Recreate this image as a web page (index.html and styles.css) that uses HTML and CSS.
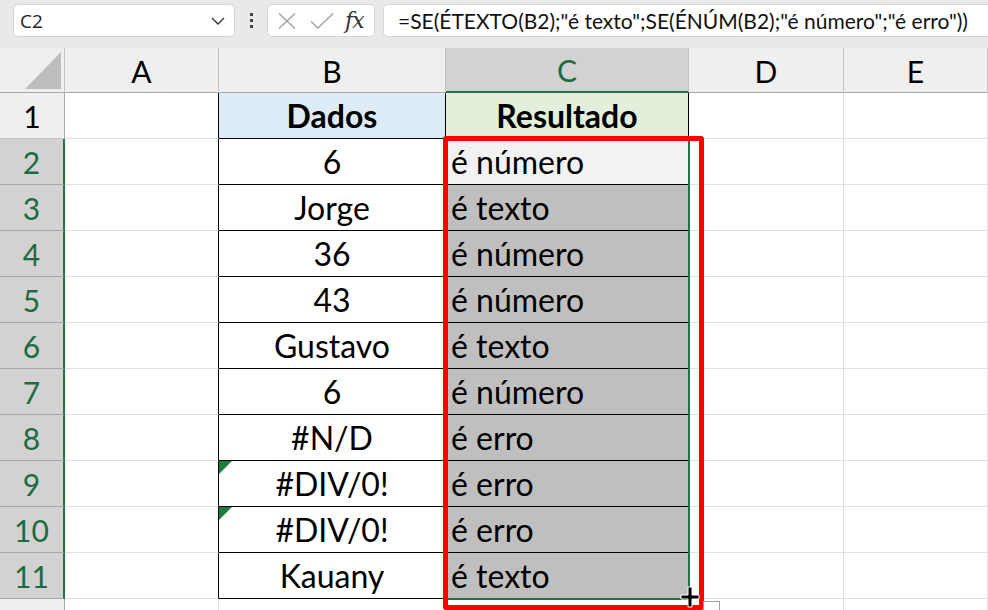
FILE: index.html
```html
<!DOCTYPE html>
<html lang="pt-BR">
<head>
    <meta charset="UTF-8">
    <title>Planilha - SE ÉTEXTO ÉNÚM</title>
    <link rel="stylesheet" href="styles.css">
</head>
<body>
    <div class="toolbar">
        <div class="namebox">
            <span>C2</span>
            <svg class="chevron" width="14" height="8" viewBox="0 0 14 8"><path d="M1 1 L7 7 L13 1" fill="none" stroke="#333" stroke-width="1.4"/></svg>
        </div>
        <div class="grip"><i></i><i></i><i></i></div>
        <div class="fxbox">
            <svg width="18" height="16" viewBox="0 0 18 16"><path d="M1 0.5 L17 15.5 M17 0.5 L1 15.5" stroke="#a6a6a6" stroke-width="1.5" fill="none"/></svg>
            <svg width="24" height="16" viewBox="0 0 24 16"><path d="M1 8.5 L8 15 L23 0.5" stroke="#a6a6a6" stroke-width="1.5" fill="none"/></svg>
            <span class="fx">fx</span>
        </div>
        <div class="formula">=SE(ÉTEXTO(B2);"é texto";SE(ÉNÚM(B2);"é número";"é erro"))</div>
    </div>

    <div class="sheet">
        <div class="grid">
            <!-- cabecalho -->
            <div class="corner"><div class="tri"></div></div>
            <div class="colhead">A</div>
            <div class="colhead">B</div>
            <div class="colhead sel">C</div>
            <div class="colhead">D</div>
            <div class="colhead">E</div>

            <!-- linha 1 -->
            <div class="rowhead">1</div>
            <div class="cell edge"></div>
            <div class="cell tb title-b">Dados</div>
            <div class="cell tb title-c">Resultado</div>
            <div class="cell"></div>
            <div class="cell"></div>

            <div class="rowhead sel">2</div>
            <div class="cell edge"></div>
            <div class="cell tb mid">6</div>
            <div class="cell tb res active">é número</div>
            <div class="cell"></div>
            <div class="cell"></div>

            <div class="rowhead sel">3</div>
            <div class="cell edge"></div>
            <div class="cell tb mid">Jorge</div>
            <div class="cell tb res">é texto</div>
            <div class="cell"></div>
            <div class="cell"></div>

            <div class="rowhead sel">4</div>
            <div class="cell edge"></div>
            <div class="cell tb mid">36</div>
            <div class="cell tb res">é número</div>
            <div class="cell"></div>
            <div class="cell"></div>

            <div class="rowhead sel">5</div>
            <div class="cell edge"></div>
            <div class="cell tb mid">43</div>
            <div class="cell tb res">é número</div>
            <div class="cell"></div>
            <div class="cell"></div>

            <div class="rowhead sel">6</div>
            <div class="cell edge"></div>
            <div class="cell tb mid">Gustavo</div>
            <div class="cell tb res">é texto</div>
            <div class="cell"></div>
            <div class="cell"></div>

            <div class="rowhead sel">7</div>
            <div class="cell edge"></div>
            <div class="cell tb mid">6</div>
            <div class="cell tb res">é número</div>
            <div class="cell"></div>
            <div class="cell"></div>

            <div class="rowhead sel">8</div>
            <div class="cell edge"></div>
            <div class="cell tb mid">#N/D</div>
            <div class="cell tb res">é erro</div>
            <div class="cell"></div>
            <div class="cell"></div>

            <div class="rowhead sel">9</div>
            <div class="cell edge"></div>
            <div class="cell tb mid err">#DIV/0!</div>
            <div class="cell tb res">é erro</div>
            <div class="cell"></div>
            <div class="cell"></div>

            <div class="rowhead sel">10</div>
            <div class="cell edge"></div>
            <div class="cell tb mid err">#DIV/0!</div>
            <div class="cell tb res">é erro</div>
            <div class="cell"></div>
            <div class="cell"></div>

            <div class="rowhead sel">11</div>
            <div class="cell edge"></div>
            <div class="cell tb mid">Kauany</div>
            <div class="cell tb res">é texto</div>
            <div class="cell"></div>
            <div class="cell"></div>

            <!-- linha 12, so o topo aparece -->
            <div class="rowhead last"></div>
            <div class="cell last"></div>
            <div class="cell last"></div>
            <div class="cell last"></div>
            <div class="cell last"></div>
            <div class="cell last"></div>
        </div>

        <!-- contorno da selecao e destaque vermelho -->
        <div class="selection"></div>
        <div class="highlight"></div>
        <div class="quick"></div>
        <svg class="cursor" width="20" height="22" viewBox="0 0 20 22">
            <path d="M8 1 H12 V9 H19 V13 H12 V21 H8 V13 H1 V9 H8 Z" fill="#000" stroke="#fff" stroke-width="1"/>
        </svg>
    </div>
</body>
</html>
```

FILE: styles.css
```css
* {
    margin: 0;
    padding: 0;
    box-sizing: border-box;
}
body {
    width: 988px;
    height: 610px;
    overflow: hidden;
    background-color: #fff;
    font-family: Lato, "Liberation Sans", sans-serif;
}

/* barra de formula */
.toolbar {
    height: 48px;
    background-color: #e9e9e9;
    display: flex;
    align-items: flex-start;
    padding: 4px 0 0 13px;
}
.namebox {
    width: 222px;
    height: 33px;
    background-color: #fff;
    border: 1px solid #d6d6d6;
    border-radius: 5px;
    display: flex;
    align-items: center;
    justify-content: space-between;
    padding: 0 9px 0 6px;
    font-family: "Open Sans", sans-serif;
    font-size: 19px;
    color: #222;
}
.grip {
    width: 32px;
    height: 33px;
    display: flex;
    flex-direction: column;
    align-items: center;
    justify-content: center;
    gap: 3px;
}
.grip i {
    width: 3px;
    height: 3px;
    background-color: #444;
}
.fxbox {
    width: 108px;
    height: 33px;
    background-color: #fff;
    border: 1px solid #d6d6d6;
    border-radius: 5px;
    display: flex;
    align-items: center;
    padding: 0 6px 0 10px;
    gap: 14px;
}
.fxbox .fx {
    font-family: "DejaVu Serif", "Liberation Serif", serif;
    font-style: italic;
    font-size: 22px;
    color: #333;
    margin-left: -3px;
    letter-spacing: -1px;
}
.formula {
    flex: 1;
    height: 33px;
    margin-left: 8px;
    background-color: #fff;
    border: 1px solid #d6d6d6;
    border-right: none;
    border-radius: 5px 0 0 5px;
    display: flex;
    align-items: center;
    padding-left: 14px;
    font-family: Lato, sans-serif;
    font-size: 21px;
    color: #111;
    white-space: nowrap;
}

/* planilha */
.sheet {
    position: relative;
    height: 562px;
    overflow: hidden;
}
.grid {
    display: grid;
    grid-template-columns: 65px 154px 227px 243px 155px 1fr;
    grid-template-rows: 45px repeat(11, 46px) 11px;
}
.corner {
    background-color: #efefef;
    border-right: 1px solid #c4c4c4;
    border-bottom: 1px solid #a8a8a8;
    position: relative;
}
.corner .tri {
    position: absolute;
    left: 25px;
    top: 4px;
    width: 36px;
    height: 37px;
    background-color: #bdbdbd;
    clip-path: polygon(100% 0, 100% 100%, 0 100%);
}
.colhead {
    background-color: #efefef;
    border-right: 1px solid #c4c4c4;
    border-bottom: 1px solid #a8a8a8;
    display: flex;
    align-items: center;
    justify-content: center;
    font-size: 30px;
    color: #000;
    padding-top: 1px;
}
.colhead.sel {
    background-color: #d2d2d2;
    color: #1d6b41;
    border-bottom: 2px solid #217346;
}
.rowhead {
    background-color: #efefef;
    border-right: 1px solid #a8a8a8;
    border-bottom: 1px solid #c4c4c4;
    display: flex;
    align-items: center;
    justify-content: center;
    font-size: 30px;
    color: #000;
}
.rowhead.sel {
    background-color: #d2d2d2;
    color: #1d6b41;
    border-right: 2px solid #217346;
    border-bottom-color: #a8a8a8;
}
.cell {
    border-right: 1px solid #e1e1e1;
    border-bottom: 1px solid #e1e1e1;
    display: flex;
    align-items: center;
    font-size: 32px;
    color: #000;
    white-space: nowrap;
}
.rowhead.last,
.cell.last {
    border-bottom: none;
}
.cell.edge {
    border-right-color: #000;
}
.cell.tb {
    border-right-color: #000;
    border-bottom-color: #000;
}
.title-b {
    background-color: #ddebf7;
    font-weight: bold;
    justify-content: center;
}
.title-c {
    background-color: #e2efda;
    font-weight: bold;
    justify-content: center;
}
.mid {
    justify-content: center;
}
.res {
    background-color: #bfbfbf;
    padding-left: 5px;
}
.res.active {
    background-color: #f2f2f2;
}
.err {
    position: relative;
}
.err::before {
    content: '';
    position: absolute;
    left: 0;
    top: 0;
    border-top: 13px solid #1e7b3c;
    border-right: 13px solid transparent;
}

/* sobreposicoes */
.selection {
    position: absolute;
    left: 444px;
    top: 89px;
    width: 246px;
    height: 463px;
    border: 2px solid #217346;
}
.highlight {
    position: absolute;
    left: 443px;
    top: 88px;
    width: 261px;
    height: 474px;
    border: 5px solid #f00;
    border-radius: 3px;
}
.quick {
    position: absolute;
    left: 703px;
    top: 553px;
    width: 17px;
    height: 14px;
    border: 1px solid #a0a0a0;
    background-color: #fff;
}
.cursor {
    position: absolute;
    left: 680px;
    top: 538px;
}
```
